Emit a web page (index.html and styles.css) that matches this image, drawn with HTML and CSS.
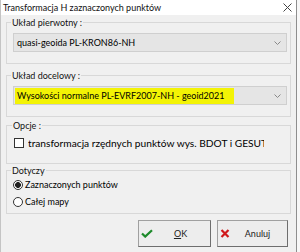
FILE: index.html
```html
<!DOCTYPE html>
<html lang="pl">
<head>
    <meta charset="UTF-8">
    <title>Transformacja H zaznaczonych punktów</title>
    <link rel="stylesheet" href="styles.css">
</head>
<body>
    <div class="okno">
        <div class="pasek-tytulu">
            <span class="tytul">Transformacja H zaznaczonych punktów</span>
            <svg class="zamknij" width="9" height="9" viewBox="0 0 9 9">
                <path d="M0.5 0.5 L8.5 8.5 M8.5 0.5 L0.5 8.5" stroke="#444" stroke-width="1" fill="none"/>
            </svg>
        </div>
        <div class="tresc">
            <fieldset class="grupa grupa-pierwotny">
                <legend>Układ pierwotny :</legend>
                <div class="lista">
                    <span class="wartosc">quasi-geoida PL-KRON86-NH</span>
                    <svg class="strzalka" width="7" height="4" viewBox="0 0 7 4">
                        <path d="M0.5 0.5 L3.5 3.5 L6.5 0.5" stroke="#888" stroke-width="1" fill="none"/>
                    </svg>
                </div>
            </fieldset>

            <fieldset class="grupa grupa-docelowy">
                <legend>Układ docelowy :</legend>
                <div class="lista">
                    <span class="wartosc zaznacz">Wysokości normalne PL-EVRF2007-NH - geoid2021</span>
                    <svg class="strzalka" width="7" height="4" viewBox="0 0 7 4">
                        <path d="M0.5 0.5 L3.5 3.5 L6.5 0.5" stroke="#888" stroke-width="1" fill="none"/>
                    </svg>
                </div>
            </fieldset>

            <fieldset class="grupa grupa-opcje">
                <legend>Opcje :</legend>
                <label class="pole-wyboru">
                    <span class="kwadrat"></span>
                    <span class="etykieta">transformacja rzędnych punktów wys. BDOT i GESUT</span>
                </label>
            </fieldset>

            <fieldset class="grupa grupa-dotyczy">
                <legend>Dotyczy</legend>
                <label class="opcja">
                    <span class="kolko zaznaczone"></span>Zaznaczonych punktów
                </label>
                <label class="opcja">
                    <span class="kolko"></span>Całej mapy
                </label>
            </fieldset>

            <div class="przyciski">
                <button class="przycisk przycisk-ok">
                    <svg width="12" height="9" viewBox="0 0 12 9">
                        <path d="M1 4.5 L4.2 7.6 L11 1.2" stroke="#1d8a2b" stroke-width="2.2" fill="none"/>
                    </svg>
                    <span class="napis"><u>O</u>K</span>
                </button>
                <button class="przycisk przycisk-anuluj">
                    <svg width="10" height="9" viewBox="0 0 10 9">
                        <path d="M1.5 1 L8.5 8 M8.5 1 L1.5 8" stroke="#d0191b" stroke-width="2.2" fill="none"/>
                    </svg>
                    <span class="napis">Anuluj</span>
                </button>
            </div>
        </div>
    </div>
</body>
</html>
```

FILE: styles.css
```css
body {
    margin: 0;
    background-color: #f7f7f7;
    font-family: Lato, "Noto Sans", sans-serif;
    font-size: 9px;
    color: #000;
}

.okno {
    width: 295px;
    height: 252px;
    background: #f0f0f0;
    border-left: 1px solid #c4c4c4;
    border-right: 1px solid #8e8e8e;
    overflow: hidden;
}

.pasek-tytulu {
    height: 15px;
    background: white;
    display: flex;
    align-items: center;
    justify-content: space-between;
    padding: 0 4px 0 2px;
}

.tytul {
    font-size: 9px;
    color: #111;
    white-space: nowrap;
}

.tresc {
    padding: 1px 5px 0 5px;
}

.grupa {
    margin: 0;
    border: 1px solid #d8d8d8;
    padding: 4px 3px 11px 6px;
    min-width: 0;
}

.grupa legend {
    padding: 0 1px;
    margin-left: -2px;
    line-height: 13px;
    color: #111;
}

.grupa-docelowy {
    margin-top: 5px;
}

.grupa-opcje {
    margin-top: 2px;
    padding: 3px 6px 12px 7px;
}

.grupa-dotyczy {
    margin-top: 0;
    padding: 0 6px 2px 6px;
}

.lista {
    height: 19px;
    box-sizing: border-box;
    background: #e5e5e5;
    border: 1px solid #cfcfcf;
    display: flex;
    align-items: center;
    justify-content: space-between;
    padding: 0 5px 0 1px;
}

.wartosc {
    padding: 0 2px;
    line-height: 16px;
    white-space: nowrap;
}

.zaznacz {
    background: #f3f305;
    padding-right: 9px;
}

.pole-wyboru {
    display: flex;
    align-items: center;
    gap: 4px;
    height: 16px;
}

.kwadrat {
    width: 8px;
    height: 8px;
    border: 1px solid #333;
    background: white;
    flex: none;
}

.etykieta {
    font-size: 10.2px;
    width: 236px;
    white-space: nowrap;
    overflow: hidden;
}

.opcja {
    display: flex;
    align-items: center;
    gap: 2px;
    height: 15px;
    margin-bottom: 2px;
}

.kolko {
    width: 10px;
    height: 10px;
    border: 1px solid #333;
    border-radius: 50%;
    background: white;
    box-sizing: border-box;
    flex: none;
}

.kolko.zaznaczone {
    background: radial-gradient(circle, #222 0 2.6px, white 3.2px);
}

.przyciski {
    display: flex;
    justify-content: flex-end;
    gap: 6px;
    margin-top: 6px;
    padding-right: 3px;
}

.przycisk {
    height: 27px;
    display: flex;
    align-items: center;
    background: #ededed;
    border: 1px solid #a0a0a0;
    border-right-color: #6e6e6e;
    border-bottom-color: #6e6e6e;
    font-family: Lato, "Noto Sans", sans-serif;
    font-size: 9px;
    color: #222;
    padding: 0 2px;
}

.przycisk-ok {
    width: 73px;
}

.przycisk-anuluj {
    width: 71px;
}

.napis {
    flex: 1;
    text-align: center;
}
```
